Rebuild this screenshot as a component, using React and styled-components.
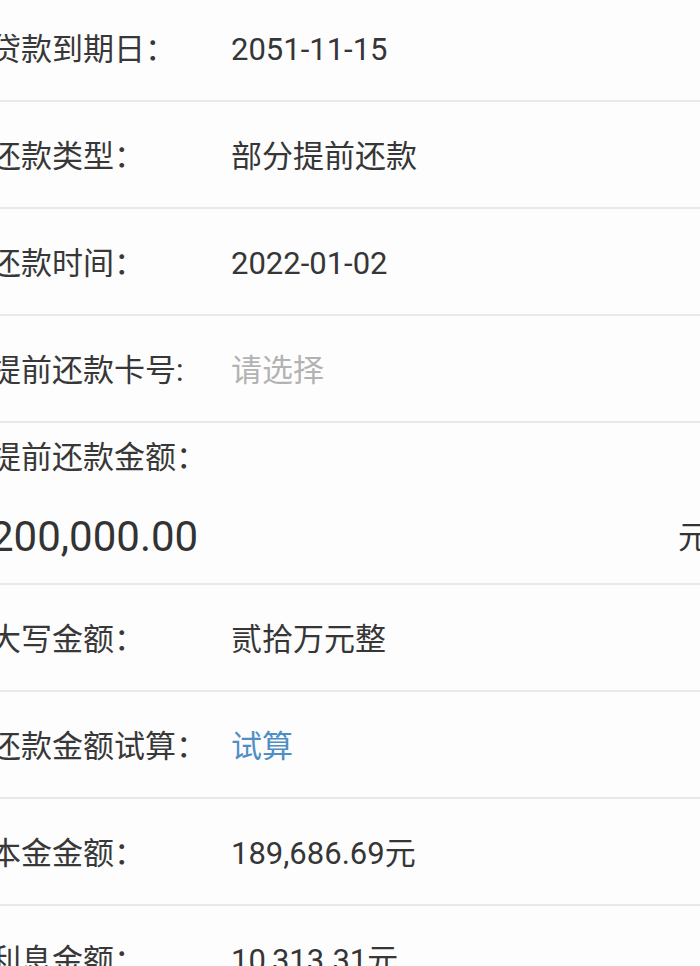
import React from "react";
import styled, { createGlobalStyle } from "styled-components";

const GlobalStyle = createGlobalStyle`
  html, body {
    margin: 0;
    padding: 0;
    background: #fdfdfd;
    overflow: hidden;
  }
  body {
    font-family: Roboto, "Noto Sans CJK SC", "Noto Sans", sans-serif;
    color: #363636;
  }
`;

// the form is wider than the window and sits a bit off to the left
const Sheet = styled.div`
  margin: -5px 0 0 -10px;
  width: 722px;
  display: flex;
  flex-direction: column;
`;

const Row = styled.div`
  box-sizing: border-box;
  height: 107px;
  padding-top: 4px;
  display: flex;
  align-items: center;
  border-bottom: 2px solid #e9e9e9;
  font-size: 31px;
  line-height: 1.2;
`;

const Label = styled.div`
  width: 241px;
  flex-shrink: 0;
  white-space: nowrap;
  color: #383838;
`;

const Value = styled.div`
  white-space: nowrap;
  color: ${(p) =>
    p.$tone === "muted" ? "#b3b3b3" : p.$tone === "link" ? "#4f8fc4" : "#363636"};
`;

const AmountRow = styled.div`
  box-sizing: border-box;
  height: 162px;
  display: flex;
  flex-direction: column;
  border-bottom: 2px solid #e9e9e9;
  padding-top: 16px;
  font-size: 31px;
  line-height: 1.2;
`;

const AmountLine = styled.div`
  margin-top: 36px;
  display: flex;
  align-items: center;
  justify-content: space-between;
  padding-right: 3px;
`;

const BigNumber = styled.span`
  font-size: 42px;
  line-height: 50px;
  color: #333;
`;

const Unit = styled.span`
  font-size: 31px;
  color: #333;
`;

const rows = [
  { label: "贷款到期日：", value: "2051-11-15" },
  { label: "还款类型：", value: "部分提前还款" },
  { label: "还款时间：", value: "2022-01-02" },
  { label: "提前还款卡号:", value: "请选择", tone: "muted" },
];

const rowsAfter = [
  { label: "大写金额：", value: "贰拾万元整" },
  { label: "还款金额试算：", value: "试算", tone: "link" },
  { label: "本金金额：", value: "189,686.69元" },
  { label: "利息金额：", value: "10,313.31元" },
];

const FieldRow = ({ label, value, tone }) => (
  <Row>
    <Label>{label}</Label>
    <Value $tone={tone}>{value}</Value>
  </Row>
);

export default function App() {
  return (
    <>
      <GlobalStyle />
      <Sheet>
        {rows.map((r) => (
          <FieldRow key={r.label} {...r} />
        ))}
        <AmountRow>
          <Label>提前还款金额：</Label>
          <AmountLine>
            <BigNumber>200,000.00</BigNumber>
            <Unit>元</Unit>
          </AmountLine>
        </AmountRow>
        {rowsAfter.map((r) => (
          <FieldRow key={r.label} {...r} />
        ))}
      </Sheet>
    </>
  );
}
